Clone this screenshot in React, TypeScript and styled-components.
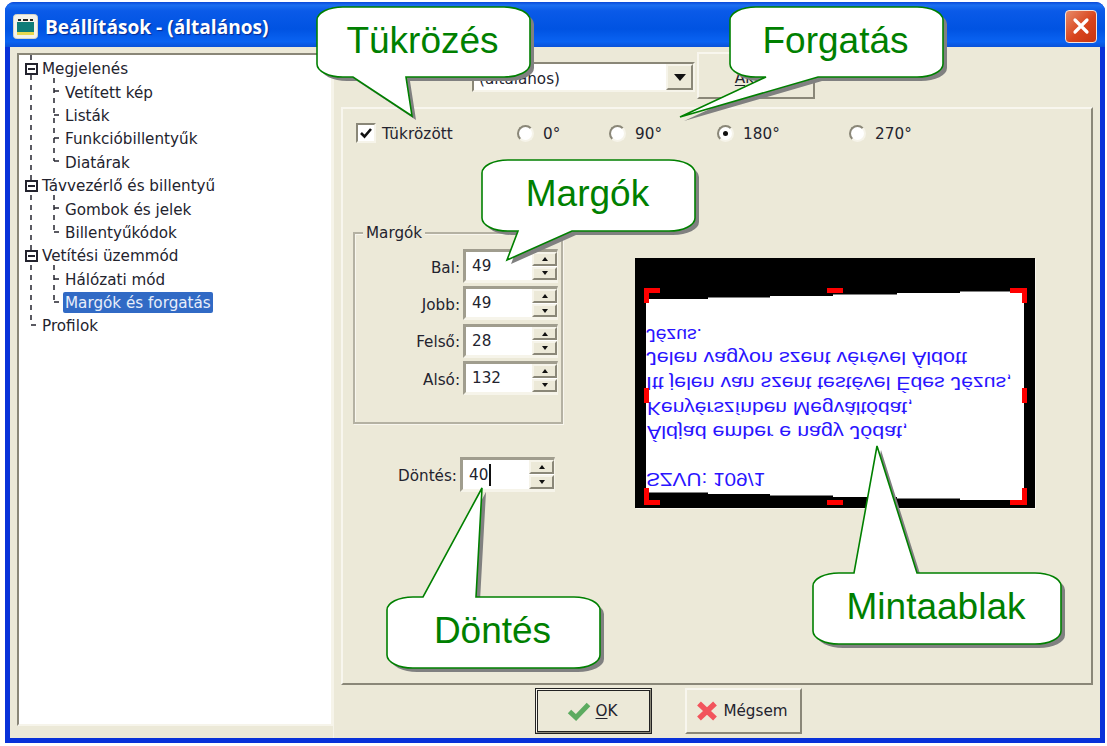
import styled, { createGlobalStyle } from 'styled-components';

const GlobalStyle = createGlobalStyle`
  html, body {
    margin: 0;
    padding: 0;
    background: #fff;
  }
  #root {
    width: 1107px;
    height: 746px;
    overflow: hidden;
  }
`;

const FACE = '#ece9d8';
const DARK = '#8a8778';
const UI_FONT = `'DejaVu Sans', 'Liberation Sans', sans-serif`;

const Page = styled.div`
  width: 1107px;
  height: 746px;
  padding: 2px 2px 3px 5px;
  box-sizing: border-box;
  background: #fff;
  font-family: ${UI_FONT};
  font-size: 15.2px;
  color: #23232e;
`;

const Window = styled.div`
  position: relative;
  width: 1100px;
  height: 741px;
  display: flex;
  flex-direction: column;
  box-sizing: border-box;
  padding: 0 5px 5px 5px;
  background: #0831d9;
  border-radius: 9px 9px 0 0;
  overflow: hidden;
`;

const TitleBar = styled.div`
  height: 45px;
  margin: 0 -5px;
  padding: 3px 8px 0 8px;
  box-sizing: border-box;
  flex: none;
  display: flex;
  align-items: center;
  gap: 7px;
  background: linear-gradient(#0a49d8 0, #1c6ff0 7%, #0a5ae8 20%, #0053e2 60%, #0a63f2 88%, #0a52d8 100%);
`;

const AppIcon = styled.svg`
  width: 25px;
  height: 25px;
  flex: none;
`;

const Title = styled.div`
  flex: 1;
  padding-top: 2px;
  font-family: 'Open Sans', 'Liberation Sans', sans-serif;
  font-weight: 700;
  font-size: 19.1px;
  color: #fff;
  text-shadow: 1px 1px 1px #0a2a90;
`;

const CloseButton = styled.div`
  width: 32px;
  height: 33px;
  box-sizing: border-box;
  display: flex;
  align-items: center;
  justify-content: center;
  border: 1px solid #f4e4dc;
  border-radius: 4px;
  background: linear-gradient(135deg, #e88a68, #d8441c 55%, #c83410);
`;

const Client = styled.div`
  flex: 1;
  min-height: 0;
  display: flex;
  background: ${FACE};
`;

const Tree = styled.div`
  position: relative;
  width: 316px;
  height: 673px;
  margin: 6px 0 0 7px;
  padding-top: 2px;
  box-sizing: border-box;
  flex: none;
  background: #fff;
  border: 2px solid;
  border-color: ${DARK} #f6f4ea #f6f4ea ${DARK};
`;

const Guides = styled.svg`
  position: absolute;
  left: 0;
  top: 0;
  width: 312px;
  height: 300px;
`;

const TreeRow = styled.div<{ $level: number }>`
  position: relative;
  height: 23.4px;
  display: flex;
  align-items: center;
  padding-left: ${(p) => (p.$level === 0 ? 6 : 44)}px;
`;

const ExpanderSlot = styled.div`
  width: 15px;
  flex: none;
`;

const Expander = styled.div`
  width: 13px;
  height: 12px;
  box-sizing: border-box;
  display: flex;
  align-items: center;
  justify-content: center;
  background: #fff;
  border: 2px solid #23232e;

  &::after {
    content: '';
    width: 7px;
    height: 2px;
    background: #23232e;
  }
`;

const TreeLabel = styled.span<{ $selected?: boolean }>`
  height: 21px;
  line-height: 22px;
  padding: 0 2px;
  border-radius: 2px;
  white-space: nowrap;
  color: ${(p) => (p.$selected ? '#e8eefa' : 'inherit')};
  background: ${(p) => (p.$selected ? '#316ac5' : 'transparent')};
`;

const RightColumn = styled.div`
  flex: 1;
  min-width: 0;
  display: flex;
  flex-direction: column;
  box-sizing: border-box;
  border-left: 1px solid #f6f4ea;
`;

const TopBar = styled.div`
  height: 60px;
  flex: none;
  display: flex;
  padding: 5px 0 0 138px;
  gap: 2px;
  box-sizing: border-box;
`;

const Combo = styled.div`
  width: 223px;
  height: 30px;
  margin-top: 10px;
  box-sizing: border-box;
  display: flex;
  align-items: center;
  justify-content: space-between;
  padding-left: 5px;
  background: #fff;
  border: 2px solid;
  border-color: ${DARK} #f6f4ea #f6f4ea ${DARK};
`;

const ComboText = styled.span`
  padding-top: 3px;
`;

const ComboArrow = styled.div`
  width: 27px;
  height: 26px;
  box-sizing: border-box;
  display: flex;
  align-items: center;
  justify-content: center;
  background: ${FACE};
  border: 2px solid;
  border-color: #f6f4ea ${DARK} ${DARK} #f6f4ea;

  &::after {
    content: '';
    border: 6px solid transparent;
    border-top: 7px solid #111;
    border-bottom: 0;
  }
`;

const BarButton = styled.div`
  width: 118px;
  height: 47px;
  padding: 5px 4px 0 0;
  box-sizing: border-box;
  display: flex;
  align-items: center;
  justify-content: center;
  border: 2px solid;
  border-color: #f8f6ee ${DARK} ${DARK} #f8f6ee;

  u {
    text-underline-offset: 2px;
  }
`;

const TabPage = styled.div`
  height: 578px;
  flex: none;
  margin: 0 7px 0 7px;
  box-sizing: border-box;
  padding: 14px 10px 0 10px;
  border: 2px solid;
  border-color: #f8f6ee ${DARK} ${DARK} #f8f6ee;
`;

const OptionsRow = styled.div`
  height: 20px;
  display: flex;
  align-items: center;
  margin-left: 3px;
`;

const Option = styled.div<{ $width: number }>`
  width: ${(p) => p.$width}px;
  flex: none;
  display: flex;
  align-items: center;
  gap: 6px;
  letter-spacing: 0.1px;
`;

const OptionText = styled.span`
  padding-top: 2px;
`;

const CheckBox = styled.div`
  width: 20px;
  height: 20px;
  box-sizing: border-box;
  display: flex;
  align-items: center;
  justify-content: center;
  background: #fff;
  border: 2px solid;
  border-color: ${DARK} #f6f4ea #f6f4ea ${DARK};
`;

const Radio = styled.div<{ $checked?: boolean }>`
  width: 17px;
  height: 17px;
  margin-right: 3px;
  box-sizing: border-box;
  display: flex;
  align-items: center;
  justify-content: center;
  border-radius: 50%;
  background: #fff;
  border: 2px solid;
  border-color: ${DARK} #f6f4ea #f6f4ea ${DARK};

  &::after {
    content: '';
    display: ${(p) => (p.$checked ? 'block' : 'none')};
    width: 5px;
    height: 5px;
    border-radius: 50%;
    background: #111;
  }
`;

const MainRow = styled.div`
  display: flex;
  align-items: flex-start;
  margin-top: 89px;
`;

const LeftColumn = styled.div`
  width: 210px;
  flex: none;
`;

const Group = styled.div`
  position: relative;
  height: 192px;
  box-sizing: border-box;
  padding-top: 15px;
  display: flex;
  flex-direction: column;
  gap: 3.4px;
  border: 2px solid #b4b1a2;
  box-shadow: 1px 1px 0 #f8f6ee, inset 1px 1px 0 #f8f6ee;
`;

const GroupTitle = styled.div`
  position: absolute;
  left: 8px;
  top: -10px;
  padding: 0 3px;
  background: ${FACE};
`;

const SpinRow = styled.div`
  display: flex;
  align-items: center;
  gap: 3px;
`;

const SpinLabel = styled.div<{ $width: number }>`
  width: ${(p) => p.$width}px;
  flex: none;
  padding-top: 3px;
  text-align: right;
`;

const SpinBox = styled.div`
  width: 95px;
  height: 34px;
  flex: none;
  box-sizing: border-box;
  display: flex;
  align-items: center;
  justify-content: space-between;
  padding-left: 6px;
  background: #fff;
  border: 3px solid;
  border-color: #a09d8e #f6f4ea #f6f4ea #a09d8e;
  border-right-width: 1px;
`;

const SpinValue = styled.div<{ $caret?: boolean }>`
  line-height: 22px;
  padding-right: 1px;
  border-right: ${(p) => (p.$caret ? '2px solid #111' : 'none')};
`;

const SpinButtons = styled.div`
  width: 25px;
  height: 100%;
  display: flex;
  flex-direction: column;
  gap: 1px;
  flex: none;
`;

const SpinButton = styled.div<{ $up?: boolean }>`
  flex: 1;
  box-sizing: border-box;
  display: flex;
  align-items: center;
  justify-content: center;
  background: ${FACE};
  border: 2px solid;
  border-color: #f6f4ea ${DARK} ${DARK} #f6f4ea;

  &::after {
    content: '';
    border: 3px solid transparent;
    border-bottom: ${(p) => (p.$up ? '4px solid #111' : '0')};
    border-top: ${(p) => (p.$up ? '0' : '4px solid #111')};
  }
`;

const TiltRow = styled(SpinRow)`
  margin-top: 33px;

  ${SpinBox} {
    height: 35px;
  }
`;

const PreviewSvg = styled.svg`
  width: 400px;
  height: 250px;
  flex: none;
  margin: 26px 0 0 72px;
  display: block;
  box-shadow: 1px 1px 0 #f8f6ee;
`;

const Footer = styled.div`
  flex: 1;
  display: flex;
  padding: 3px 0 0 201px;
  gap: 33px;
`;

const DialogButton = styled.div<{ $default?: boolean }>`
  width: 117px;
  height: 46px;
  padding-right: 3px;
  box-sizing: border-box;
  display: flex;
  align-items: center;
  justify-content: center;
  gap: 5px;
  border: 2px solid;
  border-color: #f8f6ee ${DARK} ${DARK} #f8f6ee;
  outline: ${(p) => (p.$default ? '1px solid #222' : 'none')};
  outline-offset: -1px;
  box-shadow: ${(p) => (p.$default ? 'inset 0 0 0 1px #222' : 'none')};

  u {
    text-underline-offset: 2px;
  }
`;

const CalloutBox = styled.div<{ $left: number; $top: number; $w: number; $h: number }>`
  position: absolute;
  left: ${(p) => p.$left}px;
  top: ${(p) => p.$top}px;
  width: ${(p) => p.$w}px;
  height: ${(p) => p.$h}px;
  display: flex;
  align-items: center;
  justify-content: center;
  padding-bottom: 3px;
  box-sizing: border-box;
  font-family: 'Liberation Sans', Arial, sans-serif;
  font-size: 37px;
  color: #008000;
`;

const CalloutShape = styled.svg`
  position: absolute;
  left: 0;
  top: 0;
  overflow: visible;
`;

const CalloutText = styled.span`
  position: relative;
  margin-left: -2px;
`;

interface Tail {
  edge: 'top' | 'bottom';
  from: number;
  to: number;
  tipX: number;
  tipY: number;
}

function calloutPath(w: number, h: number, tail: Tail) {
  const rx = 26;
  const ry = 13;
  const top = tail.edge === 'top' ? `L${tail.from} 0 L${tail.tipX} ${tail.tipY} L${tail.to} 0 ` : '';
  const bottom = tail.edge === 'bottom' ? `L${tail.to} ${h} L${tail.tipX} ${tail.tipY} L${tail.from} ${h} ` : '';
  return (
    `M${rx} 0 ${top}L${w - rx} 0 A${rx} ${ry} 0 0 1 ${w} ${ry} L${w} ${h - ry} ` +
    `A${rx} ${ry} 0 0 1 ${w - rx} ${h} ${bottom}L${rx} ${h} A${rx} ${ry} 0 0 1 0 ${h - ry} ` +
    `L0 ${ry} A${rx} ${ry} 0 0 1 ${rx} 0 Z`
  );
}

interface CalloutProps {
  text: string;
  left: number;
  top: number;
  w: number;
  h: number;
  tail: Tail;
}

function Callout({ text, left, top, w, h, tail }: CalloutProps) {
  const d = calloutPath(w, h, tail);
  return (
    <CalloutBox $left={left} $top={top} $w={w} $h={h}>
      <CalloutShape width={w} height={h} viewBox={`0 0 ${w} ${h}`}>
        <path d={d} fill="#808080" transform="translate(4 4)" />
        <path d={d} fill="#fff" stroke="#008000" strokeWidth="1.6" />
      </CalloutShape>
      <CalloutText>{text}</CalloutText>
    </CalloutBox>
  );
}

function Spin({ value, caret }: { value: string; caret?: boolean }) {
  return (
    <SpinBox>
      <SpinValue $caret={caret}>{value}</SpinValue>
      <SpinButtons>
        <SpinButton $up />
        <SpinButton />
      </SpinButtons>
    </SpinBox>
  );
}

const treeItems = [
  { label: 'Megjelenés', level: 0, open: true },
  { label: 'Vetített kép', level: 1 },
  { label: 'Listák', level: 1 },
  { label: 'Funkcióbillentyűk', level: 1 },
  { label: 'Diatárak', level: 1 },
  { label: 'Távvezérlő és billentyű', level: 0, open: true },
  { label: 'Gombok és jelek', level: 1 },
  { label: 'Billentyűkódok', level: 1 },
  { label: 'Vetítési üzemmód', level: 0, open: true },
  { label: 'Hálózati mód', level: 1 },
  { label: 'Margók és forgatás', level: 1, selected: true },
  { label: 'Profilok', level: 0 },
];

// page coordinates of the dashed tree lines
const guideLines = [
  [31, 55, 31, 325],
  [54, 78, 54, 161],
  [54, 195, 54, 232],
  [54, 265, 54, 302],
];
const guideTicks = [
  [54, 91],
  [54, 115],
  [54, 138],
  [54, 161],
  [54, 208],
  [54, 232],
  [54, 279],
  [54, 302],
  [31, 325],
];

const spins = [
  { label: 'Bal:', value: '49' },
  { label: 'Jobb:', value: '49' },
  { label: 'Felső:', value: '28' },
  { label: 'Alsó:', value: '132' },
];

const rotations = [
  { label: '0°', width: 92 },
  { label: '90°', width: 108 },
  { label: '180°', width: 132, checked: true },
  { label: '270°', width: 80 },
];

const previewLines = [
  { text: 'Jézus.', x: 11, y: 71, w: 56 },
  { text: 'Jelen vagyon szent vérével Áldott', x: 11, y: 94, w: 321 },
  { text: 'Itt jelen van szent testével Édes Jézus,', x: 11, y: 119, w: 366 },
  { text: 'Kenyérszínben Megváltódat,', x: 12, y: 144, w: 266 },
  { text: 'Áldjad ember e nagy Jódat,', x: 12, y: 168, w: 261 },
  { text: 'SZVU: 109/1', x: 11, y: 215, w: 119 },
];

const previewMarks = [
  'M11.5 45V32.5H25',
  'M192 32.5H208',
  'M375 32.5H389.5V45',
  'M11.5 130V145',
  'M389.5 130V145',
  'M11.5 230V244.5H25',
  'M192 244.5H208',
  'M375 244.5H389.5V230',
];

function Preview() {
  return (
    <PreviewSvg viewBox="0 0 400 250">
      <rect width="400" height="250" fill="#000" />
      <path
        d="M11 41H73V39.5H135V38H198V36.5H262V35H325V33.5H389V242H325V240.5H262V239H198V237.5H135V236H73V234.5H11Z"
        fill="#fff"
      />
      {previewLines.map((line) => (
        <text
          key={line.text}
          transform={`translate(${line.x} ${line.y}) scale(1 -1)`}
          fontFamily="'Liberation Sans', Arial, sans-serif"
          fontSize="18"
          fill="#2a14ff"
          textLength={line.w}
          lengthAdjust="spacingAndGlyphs"
        >
          {line.text}
        </text>
      ))}
      {previewMarks.map((d) => (
        <path key={d} d={d} fill="none" stroke="#ff0000" strokeWidth="5" />
      ))}
    </PreviewSvg>
  );
}

function App() {
  return (
    <Page>
      <GlobalStyle />
      <Window>
        <TitleBar>
          <AppIcon viewBox="0 0 25 25">
            <rect x="0.5" y="0.5" width="24" height="24" rx="3" fill="#f4f2ea" stroke="#d8d4c4" />
            <rect x="4" y="8" width="17" height="10" fill="#0e7c78" />
            <rect x="4" y="18" width="17" height="3" fill="#e8d850" />
            <path d="M5 6h3M10 6h5M17 6h3" stroke="#222" strokeWidth="2" />
          </AppIcon>
          <Title>Beállítások - (általános)</Title>
          <CloseButton>
            <svg width="18" height="18" viewBox="0 0 18 18">
              <path d="M3 3L15 15M15 3L3 15" stroke="#fff" strokeWidth="3.2" strokeLinecap="round" />
            </svg>
          </CloseButton>
        </TitleBar>
        <Client>
          <Tree>
            <Guides viewBox="0 0 312 300">
              <g transform="translate(-19 -55)" stroke="#23232e" strokeWidth="1.5" fill="none">
                {guideLines.map(([x1, y1, x2, y2]) => (
                  <line key={`${x1}-${y1}`} x1={x1} y1={y1} x2={x2} y2={y2} strokeDasharray="5 5" />
                ))}
                {guideTicks.map(([x, y]) => (
                  <line key={`${x}-${y}`} x1={x} y1={y} x2={x + 5} y2={y} />
                ))}
              </g>
            </Guides>
            {treeItems.map((item) => (
              <TreeRow key={item.label} $level={item.level}>
                {item.level === 0 && <ExpanderSlot>{item.open && <Expander />}</ExpanderSlot>}
                <TreeLabel $selected={item.selected}>{item.label}</TreeLabel>
              </TreeRow>
            ))}
          </Tree>
          <RightColumn>
            <TopBar>
              <Combo>
                <ComboText>(általános)</ComboText>
                <ComboArrow />
              </Combo>
              <BarButton>
                <span>
                  <u>A</u>ktív
                </span>
              </BarButton>
            </TopBar>
            <TabPage>
              <OptionsRow>
                <Option $width={161}>
                  <CheckBox>
                    <svg width="14" height="14" viewBox="0 0 14 14">
                      <path d="M2 7L5.5 10.5L12 3" fill="none" stroke="#111" strokeWidth="2.6" />
                    </svg>
                  </CheckBox>
                  <OptionText>Tükrözött</OptionText>
                </Option>
                {rotations.map((r) => (
                  <Option key={r.label} $width={r.width}>
                    <Radio $checked={r.checked} />
                    <OptionText>{r.label}</OptionText>
                  </Option>
                ))}
              </OptionsRow>
              <MainRow>
                <LeftColumn>
                  <Group>
                    <GroupTitle>Margók</GroupTitle>
                    {spins.map((s) => (
                      <SpinRow key={s.label}>
                        <SpinLabel $width={105}>{s.label}</SpinLabel>
                        <Spin value={s.value} />
                      </SpinRow>
                    ))}
                  </Group>
                  <TiltRow>
                    <SpinLabel $width={104}>Döntés:</SpinLabel>
                    <Spin value="40" caret />
                  </TiltRow>
                </LeftColumn>
                <Preview />
              </MainRow>
            </TabPage>
            <Footer>
              <DialogButton $default>
                <svg width="24" height="20" viewBox="0 0 24 20">
                  <path d="M2.5 10.5L9 16.5L21.5 3.5" fill="none" stroke="#5cab60" strokeWidth="5" />
                </svg>
                <span>
                  <u>O</u>K
                </span>
              </DialogButton>
              <DialogButton>
                <svg width="22" height="20" viewBox="0 0 22 20">
                  <path d="M3 2.5L19 17.5M19 2.5L3 17.5" fill="none" stroke="#f2545c" strokeWidth="5.5" />
                </svg>
                Mégsem
              </DialogButton>
            </Footer>
          </RightColumn>
        </Client>
        <Callout text="Tükrözés" left={312} top={5} w={213} h={70}
          tail={{ edge: 'bottom', from: 36, to: 89, tipX: 95, tipY: 109 }} />
        <Callout text="Forgatás" left={725} top={5} w={213} h={70}
          tail={{ edge: 'bottom', from: 36, to: 88, tipX: -50, tipY: 110 }} />
        <Callout text="Margók" left={477} top={158} w={213} h={71}
          tail={{ edge: 'bottom', from: 36, to: 90, tipX: 25, tipY: 100 }} />
        <Callout text="Döntés" left={382} top={595} w={213} h={71}
          tail={{ edge: 'top', from: 36, to: 89, tipX: 95, tipY: -109 }} />
        <Callout text="Mintaablak" left={808} top={571} w={248} h={71}
          tail={{ edge: 'top', from: 41, to: 104, tipX: 64, tipY: -127 }} />
      </Window>
    </Page>
  );
}

export default App;
